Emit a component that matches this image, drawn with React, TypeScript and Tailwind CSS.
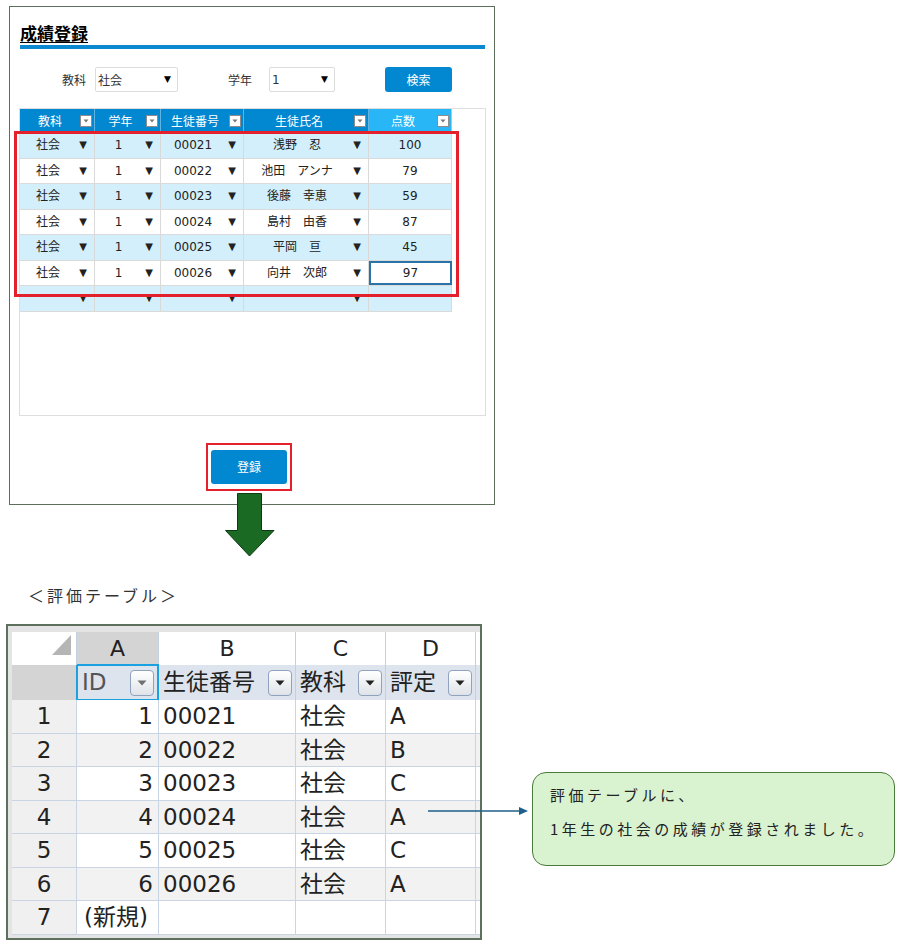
import React from 'react';

const formRows = [
  { no: '00021', name: '浅野　忍', score: '100' },
  { no: '00022', name: '池田　アンナ', score: '79' },
  { no: '00023', name: '後藤　幸恵', score: '59' },
  { no: '00024', name: '島村　由香', score: '87' },
  { no: '00025', name: '平岡　亘', score: '45' },
  { no: '00026', name: '向井　次郎', score: '97' },
];

const sheetRows = [
  { id: '1', no: '00021', grade: 'A' },
  { id: '2', no: '00022', grade: 'B' },
  { id: '3', no: '00023', grade: 'C' },
  { id: '4', no: '00024', grade: 'A' },
  { id: '5', no: '00025', grade: 'C' },
  { id: '6', no: '00026', grade: 'A' },
];

const cols = [
  { label: '教科', w: 'w-[75px]' },
  { label: '学年', w: 'w-[66px]' },
  { label: '生徒番号', w: 'w-[83px]' },
  { label: '生徒氏名', w: 'w-[125px]' },
];

function FilterBox() {
  return (
    <span className="mr-[2px] flex h-[12px] w-[12px] items-center justify-center border border-[#8c8c8c] bg-white">
      <svg width="6" height="4" viewBox="0 0 6 4">
        <path d="M0.5 0.5 L5.5 0.5 L3 3.5 Z" fill="#777" />
      </svg>
    </span>
  );
}

function ComboCell({ w, value }: { w: string; value: string }) {
  return (
    <div className={`${w} flex h-full items-center border-r border-[#d9d9d9]`}>
      <span className="flex-1 text-center">{value}</span>
      <span className="mr-[4px] w-[14px] text-center text-[10px] leading-none">▼</span>
    </div>
  );
}

function SheetFilter({ dim }: { dim?: boolean }) {
  return (
    <span className="mr-[3px] flex h-[26px] w-[24px] items-center justify-center rounded-[4px] border border-[#8fa3bf] bg-gradient-to-b from-white to-[#dfe3e8]">
      <svg width="10" height="6" viewBox="0 0 10 6">
        <path d="M0.5 0.5 L9.5 0.5 L5 5.5 Z" fill={dim ? '#707070' : '#222'} />
      </svg>
    </span>
  );
}

export default function App() {
  return (
    <div className="h-[946px] w-[900px] overflow-hidden bg-white font-['DejaVu_Sans','Noto_Sans_CJK_JP',sans-serif] text-[#222]">
      {/* entry form panel */}
      <div className="ml-[9px] mt-[6px] h-[499px] w-[486px] border border-[#5d6e5d] pl-[10px] pr-[9px] pt-[15px]">
        <h1 className="font-['Noto_Sans_CJK_JP',sans-serif] text-[17px] font-bold leading-[22px] text-black underline underline-offset-2">
          成績登録
        </h1>
        <div className="mt-px h-[4px] bg-[#0a88d0]" />

        <div className="mt-[18px] flex h-[25px] items-center text-[12px] text-[#333]">
          <span className="ml-[42px] w-[24px] font-['Noto_Sans_CJK_JP',sans-serif]">教科</span>
          <div className="ml-[9px] flex h-[25px] w-[83px] items-center justify-between rounded-[2px] border border-[#dcdcdc] pl-[2px] pr-[6px]">
            <span className="font-['Noto_Sans_CJK_JP',sans-serif]">社会</span>
            <span className="text-[9px] text-black">▼</span>
          </div>
          <span className="ml-[50px] w-[24px] font-['Noto_Sans_CJK_JP',sans-serif]">学年</span>
          <div className="ml-[17px] flex h-[25px] w-[66px] items-center justify-between rounded-[2px] border border-[#dcdcdc] pl-[2px] pr-[6px]">
            <span>1</span>
            <span className="text-[9px] text-black">▼</span>
          </div>
          <button className="ml-[50px] h-[25px] w-[67px] rounded-[3px] bg-[#0288d1] font-['Noto_Sans_CJK_JP',sans-serif] text-[12px] text-white">
            検索
          </button>
        </div>

        {/* grid */}
        <div className="relative -ml-px mt-[16px] h-[308px] w-[467px] border border-[#dedede] text-[12px]">
          <div className="flex h-[24px] text-white">
            {cols.map((c) => (
              <div key={c.label} className={`${c.w} flex h-full items-center border-r border-[#63b4e2] bg-[#0288d1]`}>
                <span className="flex-1 text-center font-['Noto_Sans_CJK_JP',sans-serif]">{c.label}</span>
                <FilterBox />
              </div>
            ))}
            <div className="flex h-full w-[83px] items-center border-r border-[#8fd3f5] bg-[#29b6f6]">
              <span className="flex-1 text-center font-['Noto_Sans_CJK_JP',sans-serif]">点数</span>
              <FilterBox />
            </div>
          </div>
          {[...formRows, null].map((r, i) => (
            <div
              key={i}
              className={`flex h-[25.5px] w-[432px] border-b border-[#dadada] ${i % 2 === 0 ? 'bg-[#d3effb]' : 'bg-white'}`}
            >
              <ComboCell w="w-[75px]" value={r ? '社会' : ''} />
              <ComboCell w="w-[66px]" value={r ? '1' : ''} />
              <ComboCell w="w-[83px]" value={r ? r.no : ''} />
              <ComboCell w="w-[125px]" value={r ? r.name : ''} />
              <div
                className={`flex h-full w-[83px] items-center justify-center ${
                  i === 5 ? 'border-2 border-[#2a73a8] bg-white' : 'border-r border-[#d9d9d9]'
                }`}
              >
                {r ? r.score : ''}
              </div>
            </div>
          ))}
          <div className="pointer-events-none absolute left-[-6px] top-[22px] h-[166px] w-[445px] border-[3px] border-[#e3202c]" />
        </div>

        <div className="ml-[186px] mt-[27px] w-[86px] border-2 border-[#e3202c] px-[3px] py-[5px]">
          <button className="h-[34px] w-[76px] rounded-[3px] bg-[#0288d1] font-['Noto_Sans_CJK_JP',sans-serif] text-[12px] text-white">
            登録
          </button>
        </div>
      </div>

      {/* down arrow */}
      <svg className="relative ml-[225px] -mt-[12px] block" width="50" height="64" viewBox="0 0 50 64">
        <path d="M12.5 0.5 H36.5 V37.5 H49 L24.5 63 L0.5 37.5 H12.5 Z" fill="#1b6a24" stroke="#0e3a13" strokeWidth="1" />
      </svg>

      <p className="ml-[28px] mt-[26px] font-['Noto_Sans_CJK_JP',sans-serif] text-[16px] leading-[24px] tracking-[3px] text-[#333]">
        ＜評価テーブル＞
      </p>

      {/* spreadsheet + note */}
      <div className="relative mt-[17px] flex items-start">
        <div className="ml-[6px] h-[316px] w-[476px] overflow-hidden border-2 border-[#5d6f5d] bg-[#e4e4e4] pl-[4px] pt-[6px] text-[23px]">
          {/* column letters */}
          <div className="flex h-[33px] text-[22px]">
            <div className="relative h-full w-[65px] border-r border-[#c2d0e2] bg-white">
              <svg className="absolute bottom-[10px] right-[5px]" width="19" height="20" viewBox="0 0 19 20">
                <path d="M19 0 V20 H0 Z" fill="#b5b5b5" />
              </svg>
            </div>
            <div className="flex h-full w-[82px] items-center justify-center border-r border-[#c2d0e2] bg-[#d4d4d4]">A</div>
            <div className="flex h-full w-[137px] items-center justify-center border-r border-[#c2d0e2] bg-white">B</div>
            <div className="flex h-full w-[90px] items-center justify-center border-r border-[#c2d0e2] bg-white">C</div>
            <div className="flex h-full w-[90px] items-center justify-center border-r border-[#c2d0e2] bg-white">D</div>
            <div className="h-full flex-1 bg-white" />
          </div>
          {/* field headers */}
          <div className="flex h-[35px]">
            <div className="h-full w-[65px] border-r border-[#c2d0e2] bg-[#d4d4d4]" />
            <div className="-my-px -ml-px flex h-[37px] w-[83px] items-center justify-between border-2 border-[#19a1e0] bg-[#dde4ed] pl-[4px] text-[#555]">
              <span>ID</span>
              <SheetFilter dim />
            </div>
            <div className="flex h-full w-[137px] items-center justify-between border-r border-[#c2d0e2] bg-[#dde4ed] pl-[4px]">
              <span>生徒番号</span>
              <SheetFilter />
            </div>
            <div className="flex h-full w-[90px] items-center justify-between border-r border-[#c2d0e2] bg-[#dde4ed] pl-[4px]">
              <span>教科</span>
              <SheetFilter />
            </div>
            <div className="flex h-full w-[90px] items-center justify-between border-r border-[#c2d0e2] bg-[#dde4ed] pl-[4px]">
              <span>評定</span>
              <SheetFilter />
            </div>
            <div className="h-full flex-1 bg-[#dde4ed]" />
          </div>
          {[...sheetRows, null].map((r, i) => {
            const bg = i % 2 === 1 ? 'bg-[#f2f2f2]' : 'bg-white';
            return (
              <div key={i} className="flex h-[33.5px]">
                <div className="flex h-full w-[65px] items-center justify-center border-b border-r border-[#c9d5e4] bg-[#f0f0f0]">
                  {i + 1}
                </div>
                <div className={`flex h-full w-[82px] items-center border-b border-r border-[#c9d5e4] ${bg} ${r ? 'justify-end pr-[5px]' : 'pl-[7px]'}`}>
                  {r ? r.id : '(新規)'}
                </div>
                <div className={`flex h-full w-[137px] items-center border-b border-r border-[#c9d5e4] pl-[4px] ${bg}`}>{r ? r.no : ''}</div>
                <div className={`flex h-full w-[90px] items-center border-b border-r border-[#c9d5e4] pl-[4px] ${bg}`}>{r ? '社会' : ''}</div>
                <div className={`flex h-full w-[90px] items-center border-b border-r border-[#c9d5e4] pl-[4px] ${bg}`}>{r ? r.grade : ''}</div>
                <div className={`h-full flex-1 border-b border-[#c9d5e4] ${bg}`} />
              </div>
            );
          })}
        </div>

        <svg className="absolute left-[428px] top-[182px]" width="100" height="10" viewBox="0 0 100 10">
          <line x1="0" y1="5" x2="92" y2="5" stroke="#1f5f8a" strokeWidth="1.5" />
          <path d="M91 1 L100 5 L91 9 Z" fill="#1f5f8a" />
        </svg>

        <div className="ml-[50px] mt-[148px] h-[94px] w-[363px] rounded-[14px] border-[1.5px] border-[#4b7b3b] bg-[#d9f2d0] pl-[17px] pt-[5px] font-['Noto_Sans_CJK_JP',sans-serif] text-[15px] leading-[34px] tracking-[3.5px] text-[#222]">
          <div>評価テーブルに、</div>
          <div>1年生の社会の成績が登録されました。</div>
        </div>
      </div>
    </div>
  );
}
